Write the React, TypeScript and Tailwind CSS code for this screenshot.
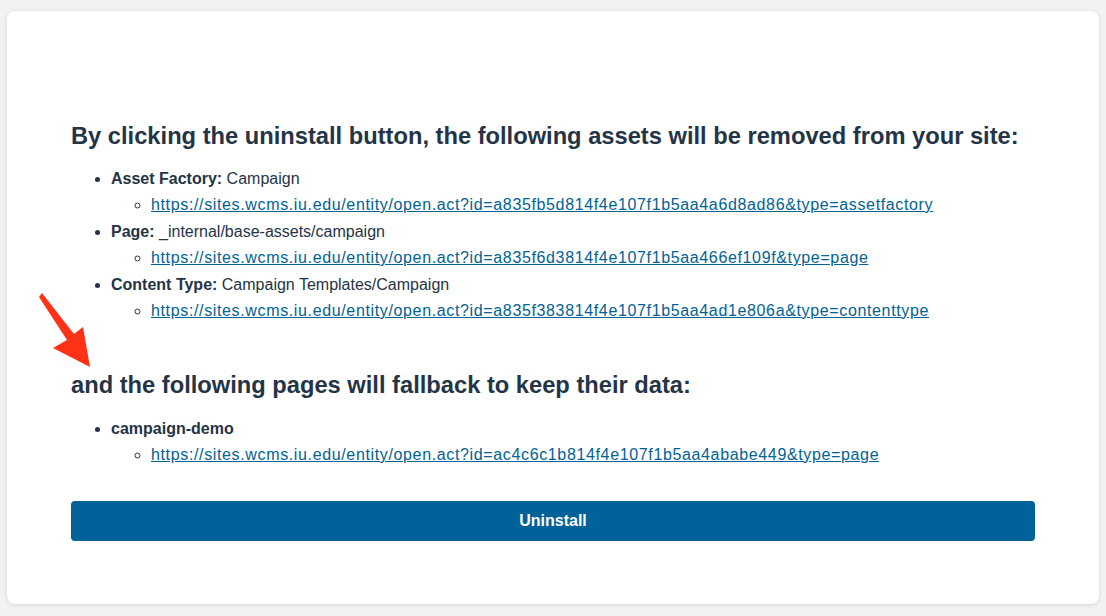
const BASE = "https://sites.wcms.iu.edu/entity/open.act?id=";

interface Asset {
  label: string;
  value?: string;
  link: string;
}

const ASSETS: Asset[] = [
  {
    label: "Asset Factory:",
    value: "Campaign",
    link: BASE + "a835fb5d814f4e107f1b5aa4a6d8ad86&type=assetfactory",
  },
  {
    label: "Page:",
    value: "_internal/base-assets/campaign",
    link: BASE + "a835f6d3814f4e107f1b5aa466ef109f&type=page",
  },
  {
    label: "Content Type:",
    value: "Campaign Templates/Campaign",
    link: BASE + "a835f383814f4e107f1b5aa4ad1e806a&type=contenttype",
  },
];

const PAGES: Asset[] = [
  {
    label: "campaign-demo",
    link: BASE + "ac4c6c1b814f4e107f1b5aa4ababe449&type=page",
  },
];

function AssetList({ items }: { items: Asset[] }) {
  return (
    <ul className="list-disc pl-10 text-[16px] leading-[26px] text-[#243447]">
      {items.map((item) => (
        <li key={item.link}>
          <span className="font-bold">{item.label}</span>
          {item.value && <span> {item.value}</span>}
          <ul className="list-[circle] pl-10">
            <li className="mb-[1px]">
              <a
                href={item.link}
                className="text-[#006298] underline tracking-[0.64px]"
              >
                {item.link}
              </a>
            </li>
          </ul>
        </li>
      ))}
    </ul>
  );
}

// red annotation arrow pointing at the second heading
function Arrow() {
  return (
    <svg
      className="absolute left-[31px] top-[280px]"
      width="60"
      height="80"
      viewBox="0 0 60 80"
    >
      <polygon
        points="1,6 4,2 36,43 45,36 52,76 15,57 29,49"
        fill="#fe3216"
        strokeLinejoin="round"
      />
    </svg>
  );
}

export default function App() {
  return (
    <div
      className="min-h-[616px] bg-[#f1f2f4] px-[7px] pt-[11px] pb-[12px]"
      style={{ fontFamily: "'Liberation Sans', Arial, sans-serif" }}
    >
      <div className="relative rounded-[8px] bg-white shadow-[0_1px_4px_rgba(0,0,0,0.12)] px-[64px] pt-[110px] pb-[63px]">
        <h2 className="text-[23.7px] font-bold leading-[30px] text-[#243447]">
          By clicking the uninstall button, the following assets will be
          removed from your site:
        </h2>
        <div className="mt-[15px]">
          <AssetList items={ASSETS} />
        </div>
        <h2 className="mt-[46px] text-[23.7px] font-bold leading-[30px] text-[#243447]">
          and the following pages will fallback to keep their data:
        </h2>
        <div className="mt-[16px]">
          <AssetList items={PAGES} />
        </div>
        <button className="mt-[32px] h-[40px] w-[964px] rounded-[4px] bg-[#006298] text-[16px] font-bold text-white">
          Uninstall
        </button>
        <Arrow />
      </div>
    </div>
  );
}
